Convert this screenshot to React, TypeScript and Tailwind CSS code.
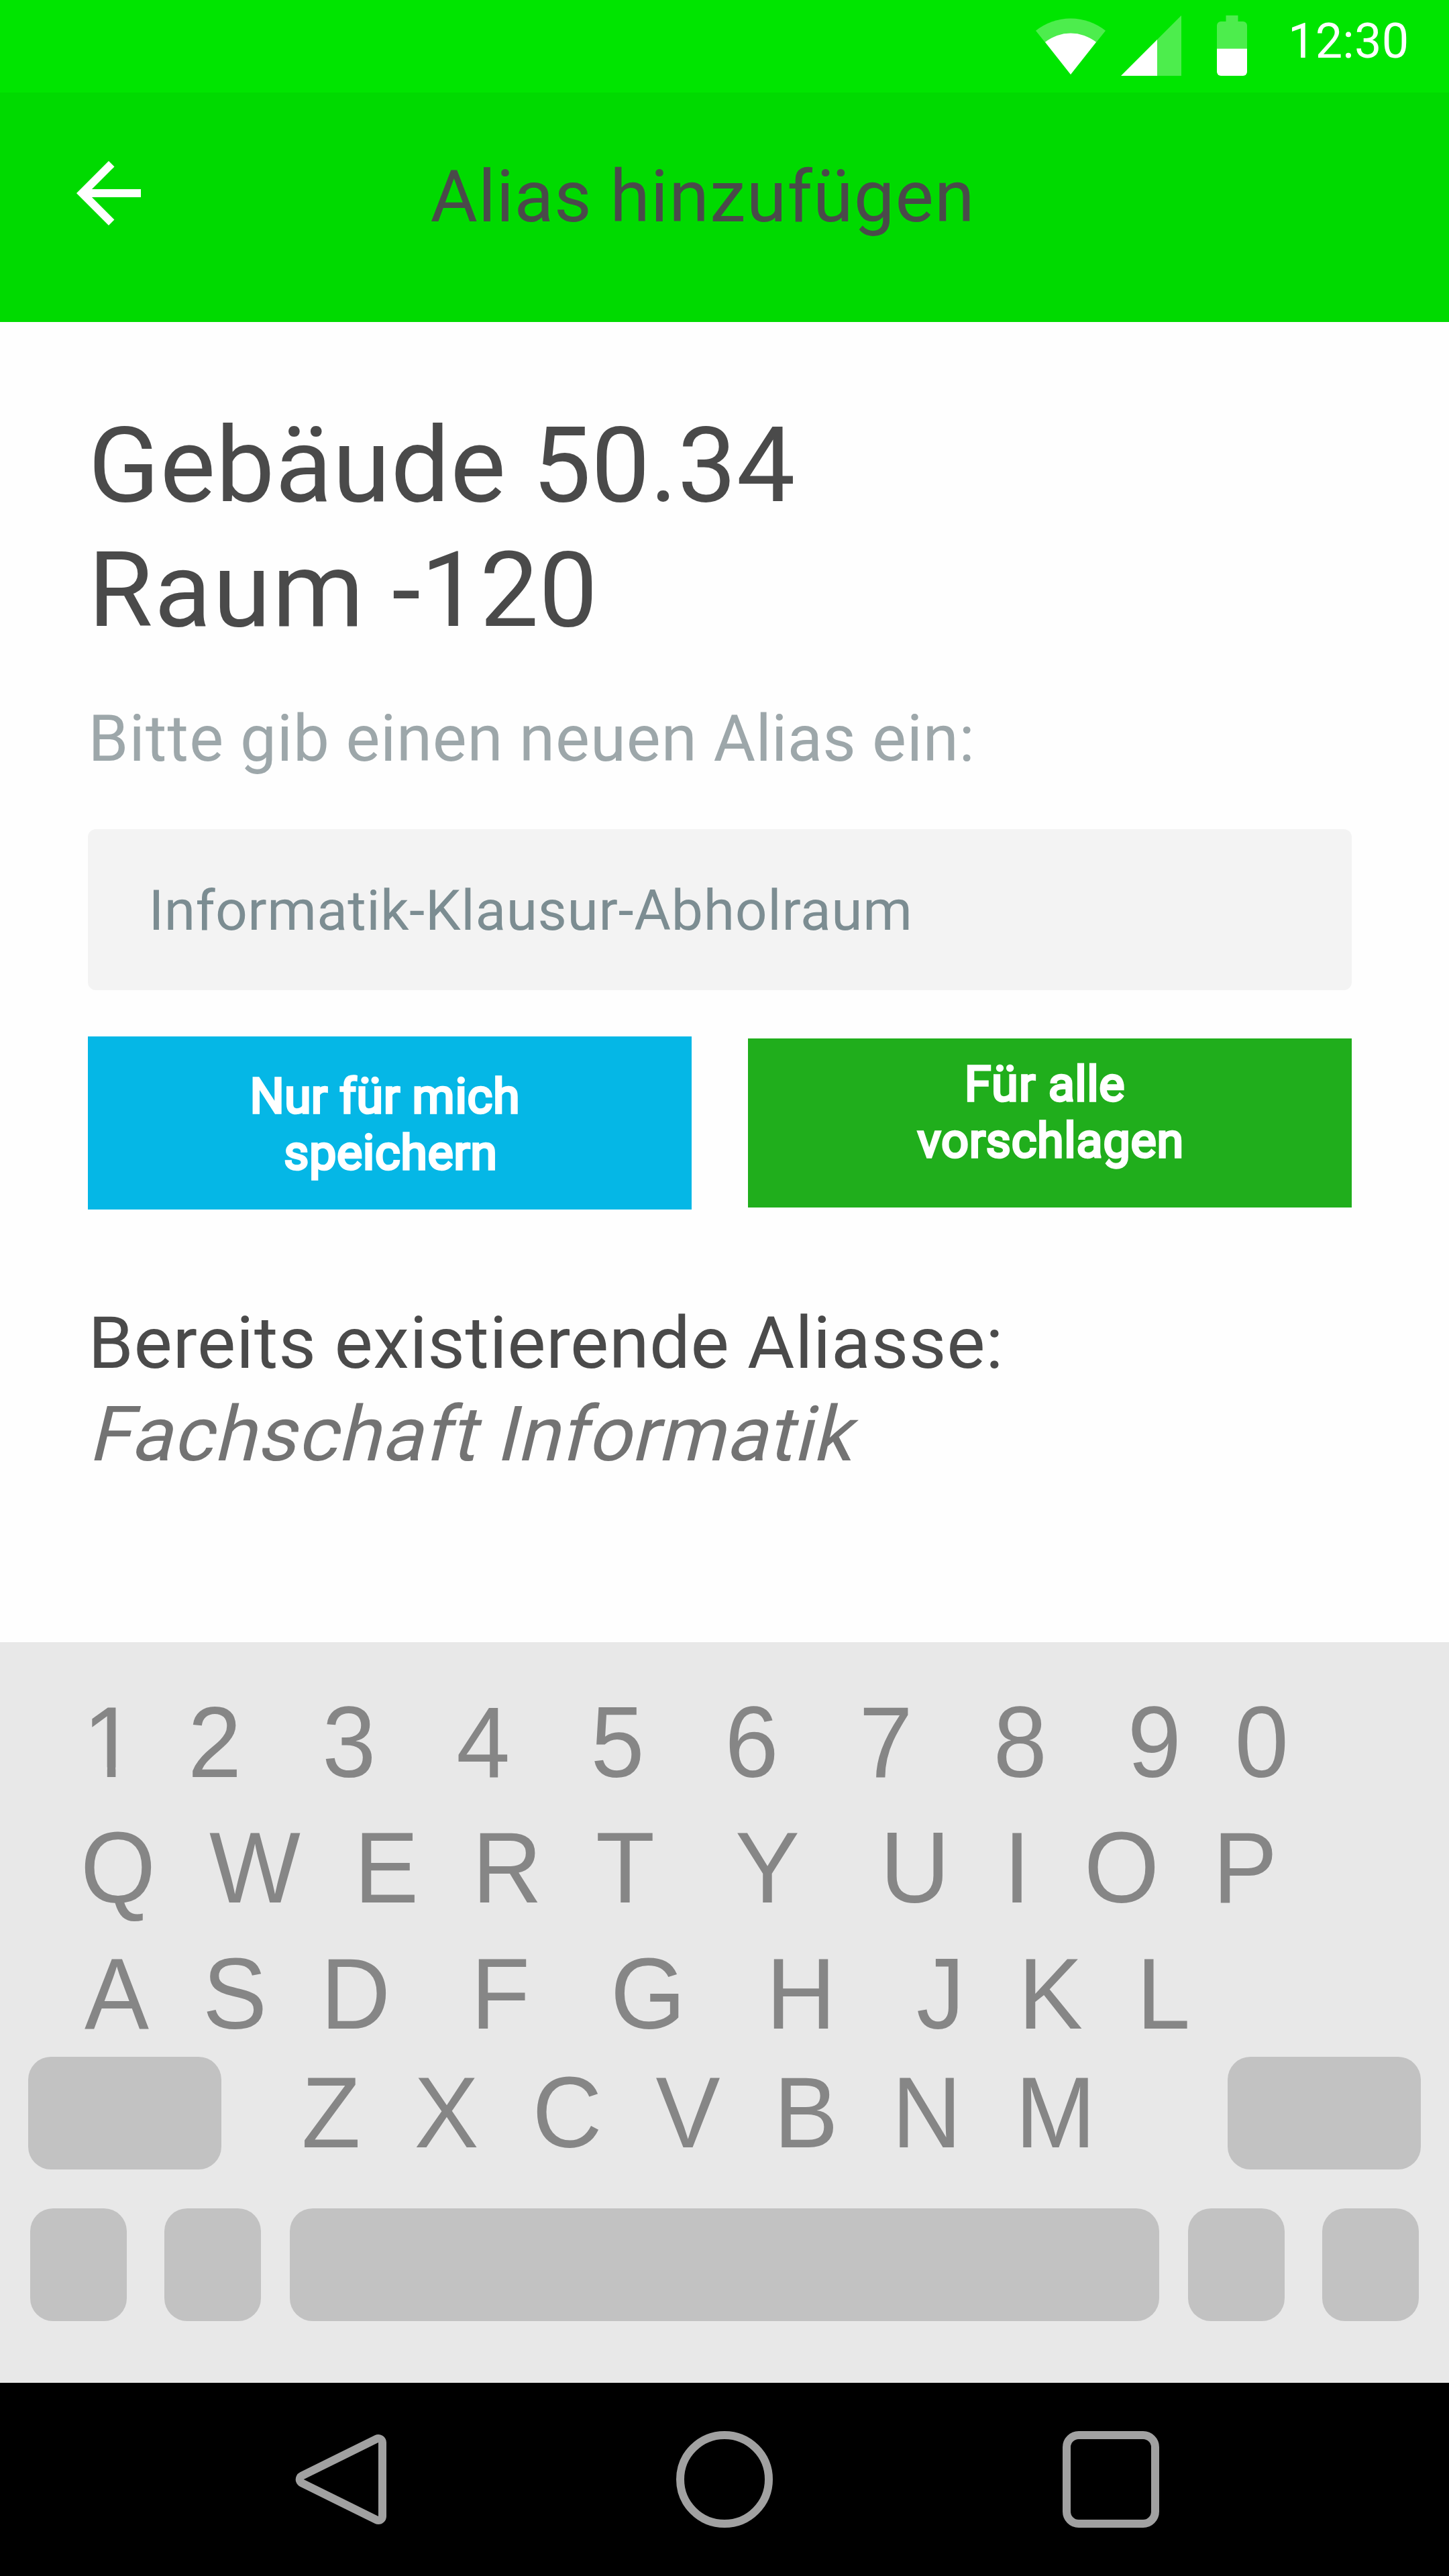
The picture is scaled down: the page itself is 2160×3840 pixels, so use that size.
import type { ReactNode } from "react";

type Key = { char: string; wide?: boolean };

const k = (char: string, wide = false): Key => ({ char, wide });

const DIGITS: Key[] = [
  k("1"), k("2"), k("3", true), k("4", true), k("5", true),
  k("6", true), k("7", true), k("8", true), k("9", true), k("0"),
];
const TOP_ROW: Key[] = [
  k("Q"), k("W"), k("E"), k("R"), k("T"),
  k("Y", true), k("U", true), k("I"), k("O"), k("P"),
];
const HOME_ROW: Key[] = [
  k("A"), k("S"), k("D"), k("F", true), k("G", true),
  k("H", true), k("J", true), k("K"), k("L"),
];
const BOTTOM_ROW: Key[] = [k("Z"), k("X"), k("C"), k("V"), k("B"), k("N"), k("M")];

function WifiIcon() {
  return (
    <svg className="mt-[27px] h-[84px] w-[104px]" viewBox="0 0 104 84" fill="#fff">
      <path fillOpacity="0.3" d="M52 84 0 18.7A83.4 83.4 0 0 1 104 18.7Z" />
      <path d="M52 84 14 35.8A61.2 61.2 0 0 1 90 35.8Z" />
    </svg>
  );
}

function SignalIcon() {
  return (
    <svg className="mt-[23px] ml-[23px] h-[90px] w-[90px]" viewBox="0 0 90 90" fill="#fff">
      <path fillOpacity="0.3" d="M54 90V36L90 0V90Z" />
      <path d="M0 90 54 36V90Z" />
    </svg>
  );
}

function BatteryIcon() {
  return (
    <svg className="mt-[23px] ml-[53px] h-[90px] w-[45px]" viewBox="0 0 45 90" fill="#fff">
      <path fillOpacity="0.3" d="M0 49.5V15a6 6 0 0 1 6-6h7.5V0h18v9H39a6 6 0 0 1 6 6v34.5Z" />
      <path d="M0 49.5h45V84a6 6 0 0 1-6 6H6a6 6 0 0 1-6-6Z" />
    </svg>
  );
}

function StatusBar() {
  return (
    <div className="flex h-[138px] items-start bg-[#00e500] pl-[1544px]">
      <WifiIcon />
      <SignalIcon />
      <BatteryIcon />
      <span className="mt-[19px] ml-[61px] text-[72px] leading-[85px] tracking-[0.2px] text-white">12:30</span>
    </div>
  );
}

function AppBar() {
  return (
    <header className="flex h-[342px] items-start bg-[#00da00] pl-[90px]">
      <svg className="mt-[78px] size-[144px]" viewBox="0 0 24 24" fill="#fff">
        <path d="M20 11H7.83l5.59-5.59L12 4l-8 8 8 8 1.41-1.41L7.83 13H20v-2z" />
      </svg>
      <h1 className="mt-[92px] ml-[407.6px] text-[108px] leading-[126px] whitespace-nowrap text-[#4a4a4a]">
        <span className="tracking-[0.67px]">Alias</span> <span className="tracking-[1.14px]">hinzufügen</span>
      </h1>
    </header>
  );
}

function LetterRow({ keys, className }: { keys: Key[]; className: string }) {
  return (
    <div
      className={`flex origin-[0_130px] scale-y-[1.04] font-['Liberation_Sans',Arial,sans-serif] text-[144px] leading-[161px] text-[#868686] ${className}`}
    >
      {keys.map(({ char, wide }, i) => {
        const gap = i === 0 ? "" : wide ? "ml-[120px]" : "ml-20";
        const footless =
          char === "1"
            ? "translate-x-[3.5px] [clip-path:polygon(0_0,100%_0,100%_116px,48.9px_116px,48.9px_100%,36.3px_100%,36.3px_116px,0_116px)]"
            : "";
        return (
          <span key={char} className={`${gap} ${footless}`}>
            {char}
          </span>
        );
      })}
    </div>
  );
}

function BlankKey({ className }: { className: string }) {
  return <div className={`h-[168px] shrink-0 rounded-[34px] bg-[#c2c2c2] ${className}`} />;
}

function Keyboard() {
  return (
    <section className="h-[1104px] bg-[#e8e8e8] pt-[71px]">
      <LetterRow keys={DIGITS} className="ml-[120px]" />
      <LetterRow keys={TOP_ROW} className="mt-[26px] ml-[120px]" />
      <LetterRow keys={HOME_ROW} className="mt-[27px] ml-[126px]" />
      <div className="mt-[11px] flex h-[168px] items-start justify-between px-[42px]">
        <BlankKey className="w-[288px]" />
        <LetterRow keys={BOTTOM_ROW} className="mt-[5px] mr-auto ml-[119.5px]" />
        <BlankKey className="w-[288px]" />
      </div>
      <div className="mt-[57.5px] flex pl-[45px]">
        <BlankKey className="w-[144px]" />
        <BlankKey className="ml-[56px] w-[144px]" />
        <BlankKey className="ml-[43px] w-[1296px]" />
        <BlankKey className="ml-[43px] w-[144px]" />
        <BlankKey className="ml-[56px] w-[144px]" />
      </div>
    </section>
  );
}

function NavBar() {
  return (
    <nav className="flex h-[288px] items-center bg-black pl-[440px]">
      <svg className="h-[144px] w-[136px]" viewBox="0 0 136 144" strokeLinejoin="round">
        <path d="M12.7 72 124 17V127Z" fill="#a1a1a1" stroke="#a1a1a1" strokeWidth="24" />
        <path d="M12.7 72 124 17V127Z" fill="#000" />
      </svg>
      <div className="ml-[432px] size-[144px] rounded-full border-[12px] border-[#a1a1a1]" />
      <div className="ml-[432px] size-[144px] rounded-[24px] border-[12px] border-[#a1a1a1]" />
    </nav>
  );
}

function ActionButton({ className, children }: { className: string; children: ReactNode }) {
  return (
    <button
      className={`block w-[900px] text-center text-[72px] leading-[84px] whitespace-nowrap text-white [-webkit-text-stroke:3.6px_#fff] ${className}`}
    >
      {children}
    </button>
  );
}

function AliasForm() {
  return (
    <main className="h-[1968px] bg-[#fefefe] pt-[122px] pl-[131.4px] whitespace-nowrap">
      <h2 className="text-[156px] leading-[183px] text-[#4a4a4a]">
        <div>
          <span className="tracking-[0.75px]">Gebäude</span> 50.34
        </div>
        <div className="mt-[3px]">
          <span className="tracking-[2.5px]">Raum</span> <span className="tracking-[0.3px]">-120</span>
        </div>
      </h2>
      <p className="mt-[74px] text-[96px] leading-[112px] text-[#9da7aa]">
        <span className="tracking-[1.2px]">Bitte</span> <span className="tracking-[0.8px]">gib</span>{" "}
        <span className="tracking-[0.7px]">einen</span> <span className="tracking-[1px]">neuen</span>{" "}
        <span className="tracking-[0.3px]">Alias</span> <span className="tracking-[0.8px]">ein:</span>
      </p>
      <div className="mt-[79px] h-[240px] w-[1884px] rounded-[12px] bg-[#f3f3f3] pt-[72px] pl-[90px] text-[84px] leading-[99px] text-[#7c8d92]">
        <span className="tracking-[0.4px]">Informatik</span>
        <span className="tracking-[0.8px]">-</span>
        <span className="tracking-[0.6px]">Klausur-</span>
        <span className="tracking-[0.7px]">Abholraum</span>
      </div>
      <div className="mt-[69px] flex h-[258px] items-center gap-[84px]">
        <ActionButton className="h-[258px] bg-[#05b7e6] pt-[6px]">
          <span className="block pr-[15px]">
            <span className="tracking-[0.1px]">Nur</span> <span className="tracking-[0.5px]">für</span>{" "}
            <span className="tracking-[0.7px]">mich</span>
          </span>
          <span className="block pl-[2px] tracking-[0.6px]">speichern</span>
        </ActionButton>
        <ActionButton className="h-[252px] bg-[#20ae1c] pb-[30px]">
          <span className="block pr-[16px]">
            <span className="tracking-[1.3px]">Für</span> <span className="tracking-[0.5px]">alle</span>
          </span>
          <span className="block pl-[2px] tracking-[0.7px]">vorschlagen</span>
        </ActionButton>
      </div>
      <h3 className="mt-[136px] text-[108px] leading-[126px] text-[#4a4a4a]">
        <span className="tracking-[0.8px]">Bereits</span> <span className="tracking-[0.53px]">existierende</span>{" "}
        <span className="tracking-[0.65px]">Aliasse:</span>
      </h3>
      <p className="mt-[6px] origin-[0_106px] -skew-x-[13.5deg] text-[114px] leading-[134px] text-[#737373]">
        <span className="tracking-[1.3px]">Fachschaft</span> <span className="tracking-[0.9px]">Informatik</span>
      </p>
    </main>
  );
}

export default function App() {
  return (
    <div className="flex h-[3840px] w-[2160px] flex-col overflow-hidden font-[Roboto,sans-serif]">
      <StatusBar />
      <AppBar />
      <AliasForm />
      <Keyboard />
      <NavBar />
    </div>
  );
}
